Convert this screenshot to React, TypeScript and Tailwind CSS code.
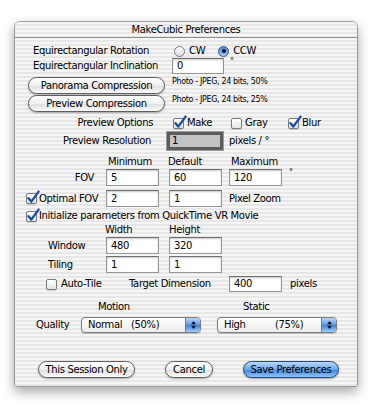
import React from 'react';

const stripes =
  'bg-[image:repeating-linear-gradient(180deg,#f6f6f6_0px,#f6f6f6_2px,#e7e7e7_2px,#e7e7e7_4px)]';

function Field({ value, w = 53, h = 17 }: { value: string; w?: number; h?: number }) {
  return (
    <div
      className="shrink-0 flex items-center pl-[4px] bg-white border border-[#969696] border-t-[#6e6e6e] shadow-[inset_0_1px_2px_rgba(0,0,0,0.22)] text-[10px] text-black"
      style={{ width: w, height: h }}
    >
      {value}
    </div>
  );
}

function Check({ checked }: { checked?: boolean }) {
  return (
    <span className="relative inline-block shrink-0 w-[11px] h-[11px] rounded-[2px] border border-[#7a7a7a] bg-[linear-gradient(#ffffff,#e4e4e4)] shadow-[0_1px_1px_rgba(0,0,0,0.15)]">
      {checked && (
        <svg viewBox="0 0 14 14" className="absolute left-[-1px] top-[-4px] w-[14px] h-[14px]">
          <path d="M2.5 8.2 L5.3 11.6 L12.6 1.6" fill="none" stroke="#1d4fa8" strokeWidth="2.4" strokeLinecap="round" strokeLinejoin="round" />
        </svg>
      )}
    </span>
  );
}

function Radio({ on }: { on?: boolean }) {
  return on ? (
    <span className="shrink-0 w-[11px] h-[11px] rounded-full border border-[#34589a] bg-[linear-gradient(#4b86d8,#9cc9f6)] flex items-center justify-center">
      <span className="w-[4px] h-[4px] rounded-full bg-[#111]" />
    </span>
  ) : (
    <span className="shrink-0 w-[11px] h-[11px] rounded-full border border-[#7a7a7a] bg-[linear-gradient(#ffffff,#dcdcdc)]" />
  );
}

function PushButton({ label, w, blue }: { label: string; w: number; blue?: boolean }) {
  return (
    <div
      className={
        blue
          ? 'shrink-0 h-[17px] rounded-full border border-[#25467f] bg-[linear-gradient(#b9d8fb,#6aa6ea_50%,#3f82dc_51%,#8fc4f6)] shadow-[0_1px_2px_rgba(0,0,0,0.35)] flex items-center justify-center text-[10px] text-black'
          : 'shrink-0 h-[17px] rounded-full border border-[#5e5e5e] bg-[linear-gradient(#ffffff,#efefef_50%,#dedede_51%,#fafafa)] shadow-[0_1px_2px_rgba(0,0,0,0.3)] flex items-center justify-center text-[10px] text-black'
      }
      style={{ width: w }}
    >
      {label}
    </div>
  );
}

function Popup({ left, right, leftW }: { left: string; right: string; leftW: number }) {
  return (
    <div className="shrink-0 w-[120px] h-[16px] rounded-[4px] border border-[#7c7c7c] bg-[linear-gradient(#ffffff,#ececec)] shadow-[0_1px_1px_rgba(0,0,0,0.2)] flex overflow-hidden text-[10px]">
      <div className="flex-1 flex items-center pl-[6px]">
        <span style={{ width: leftW }}>{left}</span>
        <span>{right}</span>
      </div>
      <div className="w-[15px] border-l border-[#5a7fb8] bg-[linear-gradient(#b8d8fa,#5d9ae6_50%,#3f80da_51%,#9fcaf6)] flex items-center justify-center">
        <svg viewBox="0 0 6 10" className="w-[5px] h-[8px]">
          <path d="M3 0 L6 4 L0 4 Z M3 10 L6 6 L0 6 Z" fill="#111" />
        </svg>
      </div>
    </div>
  );
}

export default function App() {
  return (
    <div className="w-[375px] h-[413px] bg-white pt-[21px] pl-[14px] font-['DejaVu_Sans',sans-serif] text-[10px] tracking-[-0.35px] text-black leading-none">
      <div className="w-[344px] h-[366px] rounded-t-[6px] rounded-b-[2px] border border-[#9a9a9a] shadow-[0_5px_12px_rgba(0,0,0,0.35)] overflow-hidden">
        <div className={`h-[16px] flex items-center justify-center border-b border-[#8c8c8c] text-[10px] ${stripes}`}>
          MakeCubic Preferences
        </div>
        <div className={`h-[349px] flex flex-col ${stripes}`}>
          <div className="mt-[7px] h-[12px] flex items-center">
            <div className="w-[159px] pl-[18px]">Equirectangular Rotation</div>
            <Radio />
            <span className="ml-[4px]">CW</span>
            <span className="ml-[13px]"><Radio on /></span>
            <span className="ml-[4px]">CCW</span>
          </div>
          <div className="mt-[1px] h-[16px] flex items-center">
            <div className="w-[157px] pl-[18px]">Equirectangular Inclination</div>
            <Field value="0" w={52} h={16} />
            <span className="ml-[6px] self-start text-[8px]">°</span>
          </div>
          <div className="mt-[3px] h-[17px] flex">
            <div className="ml-[13px]"><PushButton label="Panorama Compression" w={137} /></div>
            <span className="ml-[7px] mt-[1px] text-[8px]">Photo - JPEG, 24 bits, 50%</span>
          </div>
          <div className="mt-[1px] h-[17px] flex">
            <div className="ml-[13px]"><PushButton label="Preview Compression" w={137} /></div>
            <span className="ml-[7px] mt-[1px] text-[8px]">Photo - JPEG, 24 bits, 25%</span>
          </div>
          <div className="mt-[5px] h-[12px] flex items-center">
            <div className="w-[138px] text-right">Preview Options</div>
            <div className="ml-[20px] w-[58px] flex items-center"><Check checked /><span className="ml-[3px]">Make</span></div>
            <div className="w-[57px] flex items-center"><Check /><span className="ml-[3px]">Gray</span></div>
            <div className="flex items-center"><Check checked /><span className="ml-[3px]">Blur</span></div>
          </div>
          <div className="mt-[3px] h-[18px] flex items-center">
            <div className="w-[136px] text-right">Preview Resolution</div>
            <div className="ml-[16px] w-[56px] h-[18px] border-[3px] border-[#5c5c5c] bg-[#c3c3c3] flex items-center pl-[2px] shadow-[0_0_0_1px_#9a9a9a]">1</div>
            <span className="ml-[6px]">pixels / °</span>
          </div>
          <div className="mt-[6px] h-[12px] flex items-center">
            <div className="ml-[93px] w-[60px]">Minimum</div>
            <div className="w-[63px]">Default</div>
            <div>Maximum</div>
          </div>
          <div className="mt-[1px] h-[17px] flex items-center">
            <div className="w-[79px] text-right">FOV</div>
            <div className="ml-[12px]"><Field value="5" /></div>
            <div className="ml-[10px]"><Field value="60" /></div>
            <div className="ml-[7px]"><Field value="120" /></div>
            <span className="ml-[7px] self-start text-[8px]">°</span>
          </div>
          <div className="mt-[4px] h-[17px] flex items-center">
            <div className="ml-[11px] w-[80px] flex items-center"><Check checked /><span className="ml-[2px]">Optimal FOV</span></div>
            <Field value="2" />
            <div className="ml-[10px]"><Field value="1" /></div>
            <span className="ml-[7px]">Pixel Zoom</span>
          </div>
          <div className="mt-[3px] h-[12px] flex items-center">
            <div className="ml-[11px] flex items-center"><Check checked /><span className="ml-[2px]">Initialize parameters from QuickTime VR Movie</span></div>
          </div>
          <div className="mt-[2px] h-[12px] flex items-center">
            <div className="ml-[90px] w-[64px]">Width</div>
            <div>Height</div>
          </div>
          <div className="mt-[1px] h-[17px] flex items-center">
            <div className="ml-[33px] w-[58px]">Window</div>
            <Field value="480" />
            <div className="ml-[10px]"><Field value="320" /></div>
          </div>
          <div className="mt-[2px] h-[17px] flex items-center">
            <div className="ml-[33px] w-[58px]">Tiling</div>
            <Field value="1" />
            <div className="ml-[10px]"><Field value="1" /></div>
          </div>
          <div className="mt-[3px] h-[16px] flex items-center">
            <div className="ml-[31px] w-[83px] flex items-center"><Check /><span className="ml-[4px]">Auto-Tile</span></div>
            <div className="w-[100px]">Target Dimension</div>
            <Field value="400" h={16} />
            <span className="ml-[8px]">pixels</span>
          </div>
          <div className="mt-[9px] h-[12px] flex items-center">
            <div className="ml-[83px] w-[145px]">Motion</div>
            <div>Static</div>
          </div>
          <div className="mt-[4px] h-[16px] flex items-center">
            <div className="ml-[21px] w-[45px]">Quality</div>
            <Popup left="Normal" right="(50%)" leftW={43} />
            <div className="ml-[16px]"><Popup left="High" right="(75%)" leftW={51} /></div>
          </div>
          <div className="mt-[28px] h-[17px] flex items-center">
            <div className="ml-[23px]"><PushButton label="This Session Only" w={97} /></div>
            <div className="ml-[30px]"><PushButton label="Cancel" w={48} /></div>
            <div className="ml-[30px]"><PushButton label="Save Preferences" w={96} blue /></div>
          </div>
        </div>
      </div>
    </div>
  );
}
